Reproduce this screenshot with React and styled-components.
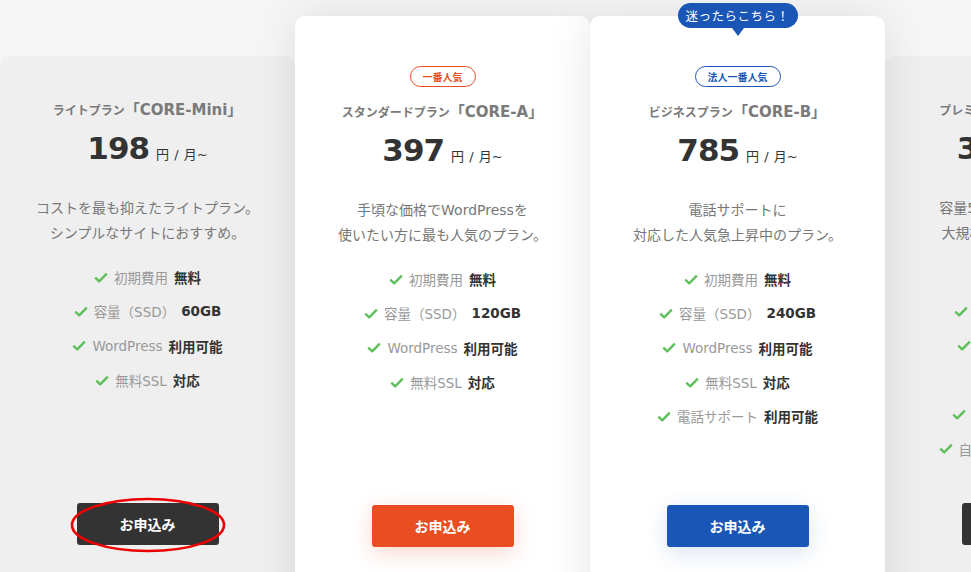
import React from "react";
import styled, { createGlobalStyle } from "styled-components";

const colors = {
  dark: "#333333",
  orange: "#e84e22",
  blue: "#1a56b5",
};

const glows = {
  dark: "none",
  orange: "0 6px 22px rgba(232, 78, 34, 0.22)",
  blue: "0 6px 22px rgba(26, 86, 181, 0.16)",
};

const plans = [
  {
    kind: "ライトプラン",
    code: "CORE-Mini",
    price: "198",
    desc: ["コストを最も抑えたライトプラン。", "シンプルなサイトにおすすめ。"],
    features: [
      ["初期費用", "無料"],
      ["容量（SSD）", "60GB"],
      ["WordPress", "利用可能"],
      ["無料SSL", "対応"],
    ],
    tone: "dark",
    front: false,
    depth: 1,
    marked: true,
  },
  {
    kind: "スタンダードプラン",
    code: "CORE-A",
    price: "397",
    badge: "一番人気",
    desc: ["手頃な価格でWordPressを", "使いたい方に最も人気のプラン。"],
    features: [
      ["初期費用", "無料"],
      ["容量（SSD）", "120GB"],
      ["WordPress", "利用可能"],
      ["無料SSL", "対応"],
    ],
    tone: "orange",
    front: true,
    depth: 2,
  },
  {
    kind: "ビジネスプラン",
    code: "CORE-B",
    price: "785",
    badge: "法人一番人気",
    tip: "迷ったらこちら！",
    desc: ["電話サポートに", "対応した人気急上昇中のプラン。"],
    features: [
      ["初期費用", "無料"],
      ["容量（SSD）", "240GB"],
      ["WordPress", "利用可能"],
      ["無料SSL", "対応"],
      ["電話サポート", "利用可能"],
    ],
    tone: "blue",
    front: true,
    depth: 3,
  },
  {
    kind: "プレミアムプラン",
    code: "CORE-X",
    price: "3,920",
    desc: ["容量500GBの大容量プラン。", "大規模なサイトにおすすめ。"],
    features: [
      ["初期費用", "無料"],
      ["容量（SSD）", "500GB"],
      ["WordPress", "利用可能"],
      ["無料SSL", "対応"],
      ["電話サポート", "利用可能"],
      ["自動バックアップ", "利用可能"],
    ],
    tone: "dark",
    front: false,
    depth: 1,
  },
];

const GlobalStyle = createGlobalStyle`
  html, body {
    margin: 0;
    padding: 0;
    background: #f6f6f6;
  }
  body {
    font-family: "DejaVu Sans", "Noto Sans CJK JP", sans-serif;
    -webkit-font-smoothing: antialiased;
  }
`;

const Slider = styled.div`
  display: flex;
  align-items: flex-start;
  width: 971px;
  height: 572px;
  overflow: hidden;
`;

const Card = styled.div`
  position: relative;
  z-index: ${(p) => p.$depth};
  flex: 0 0 295px;
  height: 620px;
  margin-top: ${(p) => (p.$front ? "16px" : "56px")};
  padding-top: ${(p) => (p.$front ? "49px" : "7px")};
  box-sizing: border-box;
  border-radius: 10px 10px 0 0;
  background: ${(p) => (p.$front ? "#ffffff" : "#efefef")};
  box-shadow: ${(p) => (p.$front ? "0 0 45px rgba(0, 0, 0, 0.1)" : "none")};
  display: flex;
  flex-direction: column;
  align-items: center;
  text-align: center;
`;

const Tip = styled.div`
  position: absolute;
  top: -13px;
  left: 50%;
  transform: translateX(-50%);
  width: 120px;
  height: 25px;
  border-radius: 13px;
  background: ${colors.blue};
  color: #fff;
  font-family: "Noto Sans CJK JP", sans-serif;
  font-size: 12.5px;
  line-height: 25px;
  letter-spacing: 0.5px;

  &::after {
    content: "";
    position: absolute;
    left: 50%;
    bottom: -8px;
    margin-left: -6px;
    border-top: 8px solid ${colors.blue};
    border-left: 6px solid transparent;
    border-right: 6px solid transparent;
  }
`;

const BadgeSlot = styled.div`
  height: 22px;
  display: flex;
  align-items: center;
  justify-content: center;
`;

const Badge = styled.span`
  box-sizing: border-box;
  height: 21px;
  padding: 0 12px;
  border: 1px solid ${(p) => colors[p.$tone]};
  border-radius: 11px;
  color: ${(p) => colors[p.$tone]};
  font-family: "Noto Sans CJK JP", sans-serif;
  font-size: 10px;
  font-weight: bold;
  line-height: 19px;
  white-space: nowrap;
`;

const Title = styled.div`
  margin-top: 15px;
  height: 20px;
  line-height: 20px;
  color: #7a7a7a;
  white-space: nowrap;
`;

const Kind = styled.span`
  font-family: "Noto Sans CJK JP", sans-serif;
  font-size: 12px;
  font-weight: bold;
`;

const Code = styled.span`
  font-size: 15px;
  font-weight: bold;
`;

const Price = styled.div`
  margin-top: 8px;
  height: 40px;
  display: flex;
  align-items: baseline;
  justify-content: center;
  white-space: nowrap;
`;

const Amount = styled.span`
  font-size: 31px;
  font-weight: bold;
  letter-spacing: -1px;
  line-height: 40px;
  color: #333;
`;

const Unit = styled.span`
  margin-left: 7px;
  font-size: 13px;
  color: #333;
  word-spacing: 1px;
`;

const Desc = styled.p`
  margin: 28px 0 0;
  font-size: 14px;
  line-height: 25px;
  color: #777;
  white-space: nowrap;
`;

const Features = styled.ul`
  list-style: none;
  margin: 14px 0 0;
  padding: 0;
  min-height: 243px;
`;

const Feature = styled.li`
  height: 34.3px;
  display: flex;
  align-items: center;
  justify-content: center;
  white-space: nowrap;
  font-size: 13.5px;
`;

const Label = styled.span`
  margin-left: 6px;
  color: #999;
`;

const Value = styled.span`
  margin-left: 6px;
  color: #333;
  font-weight: bold;
`;

const ButtonWrap = styled.div`
  position: relative;
`;

const Apply = styled.button`
  display: block;
  width: 142px;
  height: 42px;
  border: none;
  border-radius: 3px;
  background: ${(p) => colors[p.$tone]};
  box-shadow: ${(p) => glows[p.$tone]};
  color: #fff;
  font-family: "Noto Sans CJK JP", sans-serif;
  font-size: 14px;
  font-weight: bold;
  cursor: pointer;
`;

const Mark = styled.svg`
  position: absolute;
  left: -8px;
  top: -6px;
  pointer-events: none;
`;

const Check = () => (
  <svg width="14" height="11" viewBox="0 0 14 11">
    <path
      d="M1.3 5.6 L5.2 9.3 L12.8 1.6"
      fill="none"
      stroke="#5fbf5a"
      strokeWidth="2.4"
      strokeLinejoin="round"
    />
  </svg>
);

const PlanCard = ({ plan }) => (
  <Card $front={plan.front} $depth={plan.depth}>
    {plan.tip && <Tip>{plan.tip}</Tip>}
    <BadgeSlot>
      {plan.badge && <Badge $tone={plan.tone}>{plan.badge}</Badge>}
    </BadgeSlot>
    <Title>
      <Kind>{plan.kind}</Kind>
      <Code>「{plan.code}」</Code>
    </Title>
    <Price>
      <Amount>{plan.price}</Amount>
      <Unit>円 / 月~</Unit>
    </Price>
    <Desc>
      {plan.desc[0]}
      <br />
      {plan.desc[1]}
    </Desc>
    <Features>
      {plan.features.map(([label, value]) => (
        <Feature key={label}>
          <Check />
          <Label>{label}</Label>
          <Value>{value}</Value>
        </Feature>
      ))}
    </Features>
    <ButtonWrap>
      <Apply $tone={plan.tone}>お申込み</Apply>
      {plan.marked && (
        <Mark width="158" height="56" viewBox="0 0 158 56">
          <ellipse
            cx="79"
            cy="28"
            rx="76"
            ry="26"
            fill="none"
            stroke="#ee0000"
            strokeWidth="2.6"
          />
        </Mark>
      )}
    </ButtonWrap>
  </Card>
);

const App = () => (
  <>
    <GlobalStyle />
    <Slider>
      {plans.map((plan) => (
        <PlanCard key={plan.code} plan={plan} />
      ))}
    </Slider>
  </>
);

export default App;
